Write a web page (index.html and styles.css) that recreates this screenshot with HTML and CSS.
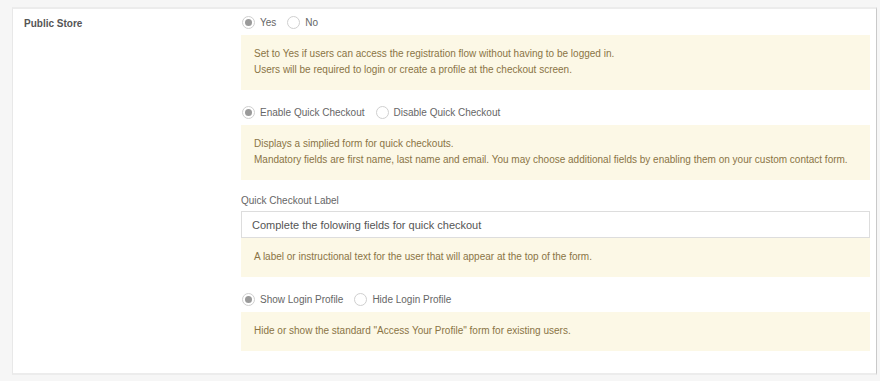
FILE: index.html
```html
<!DOCTYPE html>
<html>
<head>
	<meta charset="utf-8">
	<title>Store Settings</title>
	<link rel="stylesheet" href="styles.css">
</head>
<body>
<div class="panel">
	<div class="setting">
		<div class="setting_label">Public Store</div>
		<div class="setting_fields">
			<div class="radios">
				<label><input type="radio" name="public" checked> Yes</label>
				<label><input type="radio" name="public"> No</label>
			</div>
			<div class="note">
				Set to Yes if users can access the registration flow without having to be logged in.<br>
				Users will be required to login or create a profile at the checkout screen.
			</div>

			<div class="radios">
				<label><input type="radio" name="quick" checked> Enable Quick Checkout</label>
				<label><input type="radio" name="quick"> Disable Quick Checkout</label>
			</div>
			<div class="note">
				Displays a simplied form for quick checkouts.<br>
				Mandatory fields are first name, last name and email. You may choose additional fields by enabling them on your custom contact form.
			</div>

			<div class="field_title">Quick Checkout Label</div>
			<input type="text" class="text_input" value="Complete the folowing fields for quick checkout">
			<div class="note">
				A label or instructional text for the user that will appear at the top of the form.
			</div>

			<div class="radios">
				<label><input type="radio" name="login" checked> Show Login Profile</label>
				<label><input type="radio" name="login"> Hide Login Profile</label>
			</div>
			<div class="note">
				Hide or show the standard "Access Your Profile" form for existing users.
			</div>
		</div>
	</div>
</div>
</body>
</html>
```

FILE: styles.css
```css
body{
	margin: 0;
	background-color: #f6f6f6;
	font-family: "Liberation Sans", Arial, sans-serif;
	color: #555;
}

.panel{
	margin: 7px 0 0 12px;
	width: 865px;
	height: 368px;
	background-color: #fff;
	border-top: 2px solid #ececec;
	border-bottom: 2px solid #ececec;
	border-left: 1px solid #e8e8e8;
	border-right: 1px solid #c9c9c9;
	box-sizing: border-box;
}

.setting{
	display: flex;
}

.setting_label{
	width: 228px;
	padding: 9px 0 0 11px;
	box-sizing: border-box;
	font-size: 10px;
	font-weight: bold;
	color: #555;
}

.setting_fields{
	width: 629px;
	padding-top: 6px;
}

.radios{
	display: flex;
	gap: 10px;
	height: 14px;
	align-items: center;
	font-size: 10px;
	color: #666;
	margin-bottom: 6px;
}

.radios label{
	display: flex;
	align-items: center;
	gap: 5px;
}

.radios input[type="radio"]{
	appearance: none;
	-webkit-appearance: none;
	margin: 0 0 0 1px;
	width: 13px;
	height: 13px;
	border: 1px solid #cfcfcf;
	border-radius: 50%;
	background-color: #fff;
	box-sizing: border-box;
	position: relative;
}

.radios input[type="radio"]:checked::after{
	content: "";
	position: absolute;
	left: 2px;
	top: 2px;
	width: 7px;
	height: 7px;
	border-radius: 50%;
	background-color: #9a9a9a;
}

.note{
	background-color: #fcf8e6;
	color: #8a7445;
	font-size: 10px;
	line-height: 16px;
	padding: 11px 13px 12px 13px;
	margin-bottom: 15px;
}

.field_title{
	font-size: 10px;
	color: #666;
	margin: 3px 0 5px 0;
}

.text_input{
	display: block;
	width: 100%;
	height: 27px;
	box-sizing: border-box;
	border: 1px solid #ddd;
	padding: 0 10px;
	font-family: "Liberation Sans", Arial, sans-serif;
	font-size: 11px;
	color: #555;
	margin: 0;
}
```
